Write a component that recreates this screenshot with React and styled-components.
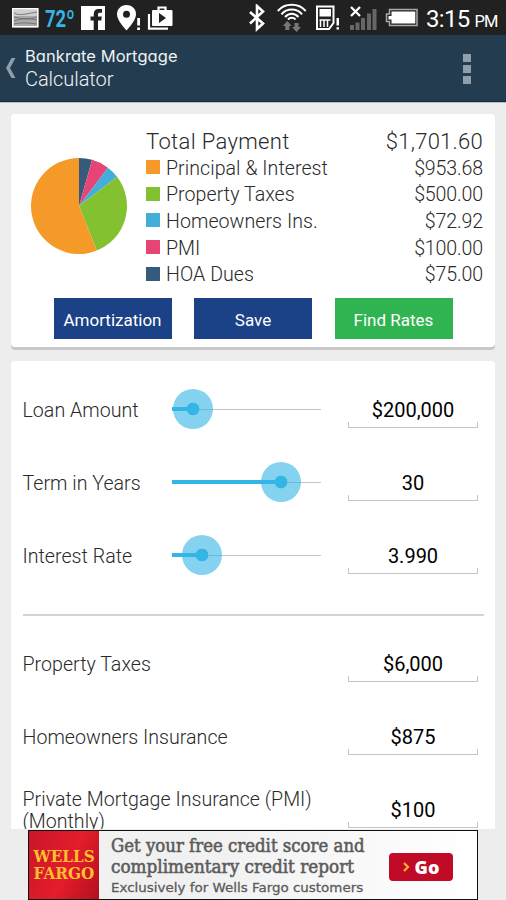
import React, {useState} from "react"
import styled, {createGlobalStyle} from "styled-components";

const GlobalStyle = createGlobalStyle`
    * {
        box-sizing: border-box;
    }
    body {
        margin: 0;
        background: #ededed;
        font-family: Roboto, "Noto Sans", sans-serif;
        color: #2a2a2a;
    }
`

const Screen = styled.div`
    display: flex;
    flex-direction: column;
    width: 506px;
    height: 900px;
    overflow: hidden;
    background: #ededed;
`

const StatusBar = styled.div`
    flex: none;
    display: flex;
    justify-content: space-between;
    height: 35px;
    padding: 0 9px 0 11px;
    background: #212121;
    color: white;
`

const StatusGroup = styled.div`
    display: flex;
    align-items: center;
    height: 35px;
    svg {
        display: block;
        flex: none;
    }
`

const Temperature = styled.div`
    width: 30px;
    margin-left: 5px;
    margin-right: 6px;
    padding-top: 2px;
    white-space: nowrap;
    font-size: 24px;
    font-weight: 700;
    line-height: 36px;
    color: #33b5e5;
    span {
        display: inline-block;
        transform: scaleX(.77);
        transform-origin: left;
    }
`

const Clock = styled.div`
    width: 71px;
    margin-left: 8px;
    padding-top: 5px;
    white-space: nowrap;
    font-size: 24px;
    line-height: 34px;
    letter-spacing: -.7px;
    small {
        margin-left: 5px;
        font-size: 16.5px;
        letter-spacing: -.8px;
    }
`

const ActionBar = styled.div`
    flex: none;
    display: flex;
    align-items: center;
    height: 67px;
    padding: 0 35px 0 5px;
    background: #233c50;
    border-bottom: 1px solid #0c2c42;
    box-shadow: 0 1px 0 #b9c1c6;
`

const Titles = styled.div`
    flex: 1;
    margin-left: 9px;
    padding-top: 1px;
    color: #eef2f5;
`

const AppName = styled.div`
    font-family: Inter, Lato, sans-serif;
    font-feature-settings: "cv11";
    font-size: 16.5px;
    font-weight: 400;
    line-height: 20px;
    letter-spacing: .05px;
`

const PageName = styled.div`
    font-size: 20px;
    font-weight: 300;
    line-height: 26px;
    letter-spacing: -.05px;
`

const MenuButton = styled.div`
    display: grid;
    gap: 3px;
    margin-top: 1px;
    i {
        width: 8px;
        height: 8px;
        background: #8f9ea9;
    }
`

const Content = styled.div`
    flex: none;
    height: 727px;
    padding: 12px 11px 0;
    overflow: hidden;
`

const Card = styled.div`
    border-radius: 4px;
    background: white;
    box-shadow: 0 3px 0 #c9c9c9;
`

const SummaryCard = styled(Card)`
    height: 233px;
    padding: 14px 12px 0 20px;
    margin-bottom: 14px;
`

const Summary = styled.div`
    display: flex;
    height: 160px;
    svg {
        flex: none;
        margin: 30px 19px 0 0;
    }
`

const Breakdown = styled.div`
    flex: 1;
    padding-top: .4px;
`

const BreakdownRow = styled.div`
    display: flex;
    align-items: center;
    height: 26.6px;
    font-size: ${props => props.$total ? 22 : 19.6}px;
    font-weight: 300;
    letter-spacing: ${props => props.$total ? .35 : .05}px;
    span:last-child {
        margin-left: auto;
        letter-spacing: ${props => props.$total ? .25 : -.15}px;
    }
`

const Swatch = styled.i`
    width: 14px;
    height: 14px;
    margin: 0 6px 2px 0;
    background: ${props => props.$color};
`

const Buttons = styled.div`
    display: flex;
    gap: 22.5px;
    margin: 10px 0 0 22.5px;
`

const Button = styled.button`
    width: 118px;
    height: 41px;
    padding: 2px 0 0;
    border: 0;
    background: ${props => props.$green ? "#2fb451" : "#1b4186"};
    color: white;
    font-family: inherit;
    font-size: 17px;
`

const FormCard = styled(Card)`
    height: 560px;
    padding: 12px 11.5px 0;
`

const Row = styled.div`
    display: flex;
    align-items: center;
    height: 73px;
`

const Label = styled.div`
    width: ${props => props.$wide ? 320 : 149}px;
    padding-top: 3px;
    font-size: 19.6px;
    font-weight: 300;
    line-height: 22px;
    letter-spacing: .02px;
`

const Track = styled.div`
    position: relative;
    width: 149px;
    height: 40px;
    margin-top: -1px;
    background: linear-gradient(#c4c4c4, #c4c4c4) 0 20px / 100% 1px no-repeat;
`

const TrackFill = styled.div`
    position: absolute;
    left: 0;
    top: 18px;
    height: 4px;
    background: #33b5e5;
`

const Thumb = styled.div`
    position: absolute;
    top: 0;
    width: 40px;
    height: 40px;
    margin-left: -20px;
    border-radius: 50%;
    background: radial-gradient(circle, #33b5e5 6px, rgba(51, 181, 229, .6) 6.7px);
`

const Field = styled.input`
    width: 130px;
    height: 36px;
    margin-left: auto;
    margin-right: 5.5px;
    padding: 0;
    border: 0;
    background:
        linear-gradient(#c4c4c4, #c4c4c4) 0 100% / 100% 1px no-repeat,
        linear-gradient(#c4c4c4, #c4c4c4) 0 100% / 1px 6px no-repeat,
        linear-gradient(#c4c4c4, #c4c4c4) 100% 100% / 1px 6px no-repeat;
    color: black;
    font-family: inherit;
    font-size: 20px;
    text-align: center;
    outline: none;
`

const Divider = styled.div`
    height: 2px;
    margin: 22px 0 11px;
    background: #d4d4d4;
`

const AdBanner = styled.div`
    flex: none;
    display: flex;
    width: 450px;
    height: 70px;
    margin: 1px 0 0 28px;
    border: 1px solid #111;
    background: linear-gradient(90deg, #f1f1f1 40%, #fff);
`

const AdLogo = styled.div`
    display: flex;
    flex-direction: column;
    justify-content: center;
    align-items: center;
    width: 70px;
    background: linear-gradient(115deg, #c8162a, #e41d2b 55%, #b30f1f);
    color: #fcc12d;
    font-family: "DejaVu Serif", serif;
    font-size: 16px;
    font-weight: 700;
    line-height: 17px;
    span {
        transform: scaleX(${props => props.$scale});
    }
`

const AdCopy = styled.div`
    width: 278px;
    padding: 5px 0 0 12px;
    white-space: nowrap;
    color: #5c5c5c;
`

const AdLine = styled.div`
    width: max-content;
    font-family: "DejaVu Serif", serif;
    font-size: 18px;
    font-weight: 400;
    line-height: 20.5px;
    transform: scaleX(${props => props.$scale});
    transform-origin: left;
    -webkit-text-stroke: .6px #5c5c5c;
`

const AdNote = styled(AdLine)`
    font-family: "DejaVu Sans", sans-serif;
    font-size: 13px;
    line-height: 22px;
    -webkit-text-stroke: .3px #5c5c5c;
`

const GoButton = styled.div`
    display: flex;
    align-items: center;
    justify-content: center;
    gap: 5px;
    width: 64px;
    height: 28px;
    margin: 22px 0 0 12px;
    border-radius: 4px;
    background: #c00a27;
    color: white;
    font-family: "Open Sans", sans-serif;
    font-size: 18px;
    font-weight: 800;
`

const costs = [
    {name: "Principal & Interest", value: 953.68, color: "#f59a28"},
    {name: "Property Taxes", value: 500, color: "#83c131"},
    {name: "Homeowners Ins.", value: 72.92, color: "#44aedb"},
    {name: "PMI", value: 100, color: "#e54475"},
    {name: "HOA Dues", value: 75, color: "#365a7b"},
]

const money = n => "$" + n.toLocaleString("en-US", {minimumFractionDigits: 2})

function Pie({items}) {
    const total = items.reduce((sum, i) => sum + i.value, 0)
    const point = v => {
        const a = v / total * Math.PI * 2
        return `${48 + 48 * Math.sin(a)} ${48 - 48 * Math.cos(a)}`
    }
    let from = 0
    // last cost comes first, clockwise from the top
    const slices = [...items].reverse().map(i => {
        const start = from
        from += i.value
        const large = i.value > total / 2 ? 1 : 0
        return <path key={i.name} fill={i.color} d={`M48 48L${point(start)}A48 48 0 ${large} 1 ${point(from)}Z`}/>
    })
    return <svg width="96" height="96" viewBox="0 0 96 96">{slices}</svg>
}

function StatusIconsLeft() {
    return (
        <StatusGroup>
            <svg width="29" height="22" viewBox="11 7 29 22">
                <rect x="12.8" y="8.8" width="25" height="18" fill="#a9a9a9" stroke="white" strokeWidth="1.6"/>
                <rect x="14" y="10" width="22.6" height="6" fill="#d0d0d0"/>
                <path d="M14 13c5 3 12 1 23 -1M14 17c8 2 14 3 23 0M14 21c8-3 14-3 23-1M14 24c9-2 15-1 23 0" fill="none" stroke="#666" strokeWidth=".8"/>
            </svg>
            <Temperature><span>72º</span></Temperature>
            <svg width="24" height="26" viewBox="81 5 24 26">
                <rect x="81" y="6" width="24" height="24" fill="white"/>
                <path d="M93.7 30V20.5H90.5V16.6H93.7V14.2C93.7 10.8 95.6 9 98.7 9H102V12.8H99.8C98.5 12.8 98 13.4 98 14.6V16.6H101.8L101.3 20.5H98V30Z" fill="#212121"/>
            </svg>
            <svg width="25" height="26" viewBox="116 5 25 26" style={{marginLeft: 11}}>
                <path d="M126.500 5C121 5 117 9 117 14.300C117 21 126.500 30.500 126.500 30.500S136 21 136 14.300C136 9 132 5 126.500 5Z" fill="white"/>
                <circle cx="126.500" cy="14.300" r="3.500" fill="#212121"/>
                <path d="M137.200 18H140V25.500H137.200ZM137.200 27.500H140V30H137.200Z" fill="white"/>
            </svg>
            <svg width="26" height="26" viewBox="147 5 26 26" style={{marginLeft: 6}}>
                <path d="M149 14V28.700H168" fill="none" stroke="white" strokeWidth="2.200"/>
                <path d="M158.500 10V7.500H165.500V10" fill="none" stroke="white" strokeWidth="2.200"/>
                <rect x="152" y="10" width="20.500" height="16" rx="1" fill="white"/>
                <path d="M159 13V23L166 18Z" fill="#212121"/>
            </svg>
        </StatusGroup>
    )
}

function StatusIconsRight() {
    return (
        <StatusGroup>
            <svg width="16" height="28" viewBox="250 4 16 28">
                <path d="M251 12L264 23.500L258 29V6L264 11.500L251 23.500" fill="none" stroke="white" strokeWidth="2.600"/>
            </svg>
            <svg width="30" height="30" viewBox="278 3 30 30" style={{marginLeft: 12}}>
                <g fill="none" stroke="white" strokeWidth="2">
                    <path d="M278.800 11C286 2.800 299.500 2.800 306.700 11"/>
                    <path d="M282.400 14.300C288 8 297.500 8 303.100 14.300"/>
                    <path d="M286 17C290 12.500 295.500 12.500 299.500 17"/>
                </g>
                <path d="M289 19.500C291 17.200 294.500 17.200 296.500 19.500" fill="none" stroke="white" strokeWidth="2"/>
                <path d="M288.300 21L292.800 26H290.300V30H286.300V26H283.800ZM297.500 32L302 27H299.500V23H295.500V27H293Z" fill="#777"/>
            </svg>
            <svg width="25" height="26" viewBox="316 5 25 26" style={{marginLeft: 8}}>
                <path d="M318 6.500H334.500V23L330 29H318Z" fill="none" stroke="white" strokeWidth="2"/>
                <rect x="320.500" y="9" width="11.500" height="7.500" fill="white"/>
                <path d="M321.500 20V27M325 20V27M328.500 20V27M320.500 20H331.500" fill="none" stroke="white" strokeWidth="1.500"/>
                <path d="M337.500 18H340V25.500H337.500ZM337.500 27.300H340V29.500H337.500Z" fill="white"/>
            </svg>
            <svg width="27" height="26" viewBox="351 4 27 26" style={{marginLeft: 10}}>
                <path d="M351 24H355V29H351ZM356.500 21.500H360.500V29H356.500ZM362 17H366V29H362ZM368 12.500H372V29H368ZM373.500 8H377.500V29H373.500Z" fill="#666"/>
                <path d="M352 6L361 15M361 6L352 15" stroke="white" strokeWidth="2.300"/>
            </svg>
            <svg width="33" height="20" viewBox="386 8 33 20" style={{marginLeft: 8}}>
                <path d="M390.500 9.500H418V25.500H390.500V21.500H387.500V14H390.500Z" fill="none" stroke="#aaa" strokeWidth="1.500"/>
                <path d="M392.500 11.500H416.300V23.500H392.500V19.500H389.500V16H392.500Z" fill="white"/>
            </svg>
            <Clock>3:15<small>PM</small></Clock>
        </StatusGroup>
    )
}

function SliderRow({label, value, position}) {
    const [text, setText] = useState(value)
    return (
        <Row>
            <Label $wide={position === undefined}>{label}</Label>
            {position !== undefined &&
                <Track>
                    <TrackFill style={{width: position}}/>
                    <Thumb style={{left: position}}/>
                </Track>}
            <Field value={text} onChange={e => setText(e.target.value)}/>
        </Row>
    )
}

function App() {
    const total = costs.reduce((sum, c) => sum + c.value, 0)

    return (
        <Screen>
            <GlobalStyle/>
            <StatusBar>
                <StatusIconsLeft/>
                <StatusIconsRight/>
            </StatusBar>
            <ActionBar>
                <svg width="11" height="20" viewBox="0 0 11 20">
                    <path d="M6.500 0H10.500L5 10L10.500 20H6.500L1 10Z" fill="#8f9ea9"/>
                </svg>
                <Titles>
                    <AppName>Bankrate Mortgage</AppName>
                    <PageName>Calculator</PageName>
                </Titles>
                <MenuButton><i/><i/><i/></MenuButton>
            </ActionBar>
            <Content>
                <SummaryCard>
                    <Summary>
                        <Pie items={costs}/>
                        <Breakdown>
                            <BreakdownRow $total>
                                <span>Total Payment</span>
                                <span>{money(total)}</span>
                            </BreakdownRow>
                            {costs.map(c =>
                                <BreakdownRow key={c.name}>
                                    <Swatch $color={c.color}/>
                                    <span>{c.name}</span>
                                    <span>{money(c.value)}</span>
                                </BreakdownRow>)}
                        </Breakdown>
                    </Summary>
                    <Buttons>
                        <Button>Amortization</Button>
                        <Button>Save</Button>
                        <Button $green>Find Rates</Button>
                    </Buttons>
                </SummaryCard>
                <FormCard>
                    <SliderRow label="Loan Amount" value="$200,000" position={21.5}/>
                    <SliderRow label="Term in Years" value="30" position={109.5}/>
                    <SliderRow label="Interest Rate" value="3.990" position={30.5}/>
                    <Divider/>
                    <SliderRow label="Property Taxes" value="$6,000"/>
                    <SliderRow label="Homeowners Insurance" value="$875"/>
                    <SliderRow label="Private Mortgage Insurance (PMI) (Monthly)" value="$100"/>
                </FormCard>
            </Content>
            <AdBanner>
                <AdLogo $scale={.95}>
                    <span>WELLS</span>
                    <span>FARGO</span>
                </AdLogo>
                <AdCopy>
                    <AdLine $scale={.92}>Get your free credit score and</AdLine>
                    <AdLine $scale={.935}>complimentary credit report</AdLine>
                    <AdNote $scale={1.033}>Exclusively for Wells Fargo customers</AdNote>
                </AdCopy>
                <GoButton>
                    <svg width="7" height="10" viewBox="0 0 7 10">
                        <path d="M1 1L5 5L1 9" fill="none" stroke="#fcb02d" strokeWidth="2.200"/>
                    </svg>
                    Go
                </GoButton>
            </AdBanner>
        </Screen>
    )
}

export default App;
